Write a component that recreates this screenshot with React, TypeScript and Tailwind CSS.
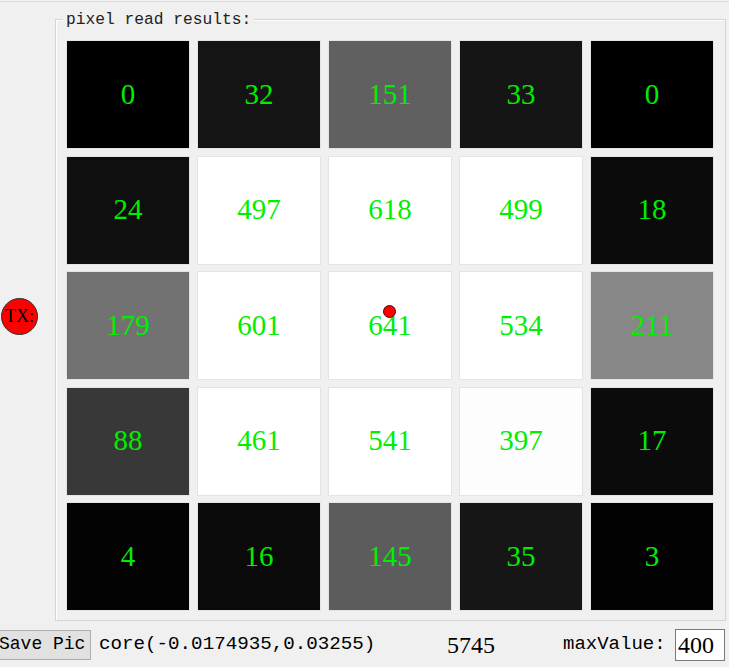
const VALUES = [
  [0, 32, 151, 33, 0],
  [24, 497, 618, 499, 18],
  [179, 601, 641, 534, 211],
  [88, 461, 541, 397, 17],
  [4, 16, 145, 35, 3],
];

const MAX_VALUE = 400;

function shade(v: number) {
  const g = Math.min(255, Math.round((v / MAX_VALUE) * 255));
  return `rgb(${g},${g},${g})`;
}

function Cell({ value, marker }: { value: number; marker?: boolean }) {
  return (
    <div
      className="relative flex h-[109px] items-center justify-center border border-[#e4e4e4] text-[29px] text-[#00ee00] [font-family:'Liberation_Serif',serif]"
      style={{ backgroundColor: shade(value) }}
    >
      {value}
      {marker && (
        <span className="absolute left-[54px] top-[33px] h-[13px] w-[13px] rounded-full border border-[#5a0000] bg-[#ff0000]" />
      )}
    </div>
  );
}

export default function App() {
  return (
    <div className="h-[667px] w-[729px] overflow-hidden bg-[#f0f0f0] text-black">
      <div className="mt-[1px] h-px bg-[#dcdcdc]" />

      <div className="mt-[17px] flex">
        <div className="flex w-[55px] items-center">
          <div className="ml-[1px] mt-[-8px] flex h-[37px] w-[37px] items-center justify-center rounded-full border border-[#333] bg-[#ff0000] text-[18px] [font-family:'Liberation_Serif',serif]">
            TX:
          </div>
        </div>

        <fieldset className="relative h-[602px] w-[671px] border border-[#d4d4d4] pl-[10px] pr-[11px] pt-[20px] shadow-[inset_1px_1px_0_#ffffff]">
          <span className="absolute left-[7px] top-[-9px] bg-[#f0f0f0] px-[3px] text-[16.25px] leading-[18px] text-[#222] [font-family:'Liberation_Mono',monospace]">
            pixel read results:
          </span>
          <div className="grid grid-cols-5 gap-x-[7px] gap-y-[6.5px]">
            {VALUES.map((row, r) =>
              row.map((v, c) => (
                <Cell key={`${r}-${c}`} value={v} marker={r === 2 && c === 2} />
              ))
            )}
          </div>
        </fieldset>
      </div>

      <div className="mt-[7px] flex h-[31px] items-center pt-[2px]">
        <button className="ml-[-6px] h-[30px] w-[97px] border border-[#adadad] bg-[#e1e1e1] pl-[4px] text-left text-[18px] [font-family:'Liberation_Mono',monospace]">
          Save Pic
        </button>
        <span className="ml-[8px] w-[348px] text-[19.2px] [font-family:'Liberation_Mono',monospace]">
          core(-0.0174935,0.03255)
        </span>
        <span className="w-[116px] text-[24px] [font-family:'Liberation_Serif',serif]">5745</span>
        <span className="w-[112px] text-[19px] [font-family:'Liberation_Mono',monospace]">maxValue:</span>
        <div className="flex h-[32px] w-[50px] items-center border border-[#7a7a7a] bg-white pl-[2px] text-[24px] [font-family:'Liberation_Serif',serif]">
          400
        </div>
      </div>
    </div>
  );
}
